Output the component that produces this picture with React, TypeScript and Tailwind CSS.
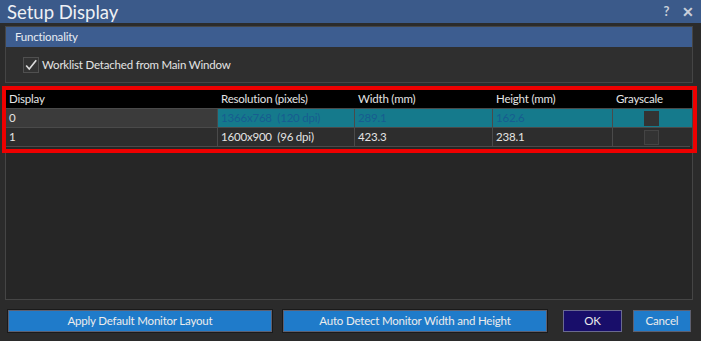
import React from 'react';

const font = { fontFamily: 'Lato, "Noto Sans", sans-serif' };

interface Row {
  display: string;
  resolution: string;
  width: string;
  height: string;
  selected: boolean;
}

const rows: Row[] = [
  { display: '0', resolution: '1366x768  (120 dpi)', width: '289.1', height: '162.6', selected: true },
  { display: '1', resolution: '1600x900  (96 dpi)', width: '423.3', height: '238.1', selected: false },
];

const cols = ['w-[212px]', 'w-[137px]', 'w-[138px]', 'w-[120px]', 'w-[77px]'];

const Check = () => (
  <svg viewBox="0 0 16 16" className="w-[16px] h-[16px]">
    <path d="M2.5 8.5 L6 12.5 L14 2.5" fill="none" stroke="#dcdcdc" strokeWidth="1.9" />
  </svg>
);

export default function App() {
  return (
    <div className="w-[701px] h-[341px] bg-[#2b2b2b] flex flex-col text-[11.5px] tracking-[-0.2px] text-[#e4e4e4] overflow-hidden" style={font}>
      {/* Title bar */}
      <div className="h-[23px] bg-[#3b5a8a] flex items-center pl-[7px] pr-[7px] shrink-0">
        <span className="text-[18.5px] tracking-normal text-[#eef0f4] leading-none mt-[1px]">Setup Display</span>
        <span className="ml-auto text-[13px] font-bold text-[#c9cfd9] mr-[13px]">?</span>
        <span className="text-[14px] font-bold text-[#c9cfd9]">✕</span>
      </div>

      {/* Functionality group */}
      <div className="ml-[5px] mr-[8px] mt-[3px] border border-[#454545] bg-[#2f2f2f] shrink-0">
        <div className="h-[20px] bg-[#3d5d90] flex items-center px-[9px] text-[#e8ecf2]">Functionality</div>
        <div className="h-[35px] flex items-center pl-[17px]">
          <div className="w-[16px] h-[16px] border border-[#505050] bg-[#333] flex items-center justify-center">
            <Check />
          </div>
          <span className="ml-[3px]">Worklist Detached from Main Window</span>
        </div>
      </div>

      {/* Display table panel */}
      <div className="relative ml-[5px] mr-[8px] mt-[3px] h-[214px] border border-[#454545] bg-[#262626] shrink-0">
        <div className="mt-[3px] flex flex-col">
          <div className="flex h-[18px] bg-black items-center">
            {['Display', 'Resolution (pixels)', 'Width (mm)', 'Height (mm)', 'Grayscale'].map((h, i) => (
              <div key={h} className={`${cols[i]} h-full flex items-center pl-[3px]`}>
                {h}
              </div>
            ))}
          </div>
          {rows.map((r) => (
            <div key={r.display} className={`flex h-[19px] border-t border-[#4a4a4a] ${r.selected ? 'bg-[#157a8c] text-[#175d90]' : 'bg-[#2d2d2d]'}`}>
              <div className={`${cols[0]} flex items-center pl-[3px] border-r border-[#4a4a4a] ${r.selected ? 'bg-[#3b3b3b] text-[#e4e4e4]' : ''}`}>{r.display}</div>
              <div className={`${cols[1]} flex items-center pl-[3px] border-r border-[#4a4a4a] whitespace-pre`}>{r.resolution}</div>
              <div className={`${cols[2]} flex items-center pl-[3px] border-r border-[#4a4a4a]`}>{r.width}</div>
              <div className={`${cols[3]} flex items-center pl-[3px] border-r border-[#4a4a4a]`}>{r.height}</div>
              <div className={`${cols[4]} flex items-center justify-center`}>
                <div className={`w-[15px] h-[15px] ${r.selected ? 'bg-[#333]' : 'bg-[#333] border border-[#444]'}`} />
              </div>
            </div>
          ))}
          <div className="border-t border-[#4a4a4a] w-[684px]" />
        </div>
        {/* Red annotation outline */}
        <div className="absolute -left-[4px] -top-[1px] w-[695px] h-[67px] border-4 border-[#ee0000] pointer-events-none" />
      </div>

      {/* Buttons */}
      <div className="flex items-center mt-[10px] pl-[8px] gap-[11px]">
        <button className="w-[264px] h-[22px] bg-[#1f7bca] border border-[#5e6070] outline outline-1 outline-[#1a1a1a] text-[#ececec]">
          Apply Default Monitor Layout
        </button>
        <button className="w-[264px] h-[22px] bg-[#1f7bca] border border-[#5e6070] outline outline-1 outline-[#1a1a1a] text-[#ececec]">
          Auto Detect Monitor Width and Height
        </button>
        <button className="ml-[5px] w-[59px] h-[22px] bg-[#180e6a] border border-[#6a6a90] text-[#ececec]">OK</button>
        <button className="w-[58px] h-[22px] bg-[#1f7bca] border border-[#5e6070] text-[#ececec]">Cancel</button>
      </div>
    </div>
  );
}
